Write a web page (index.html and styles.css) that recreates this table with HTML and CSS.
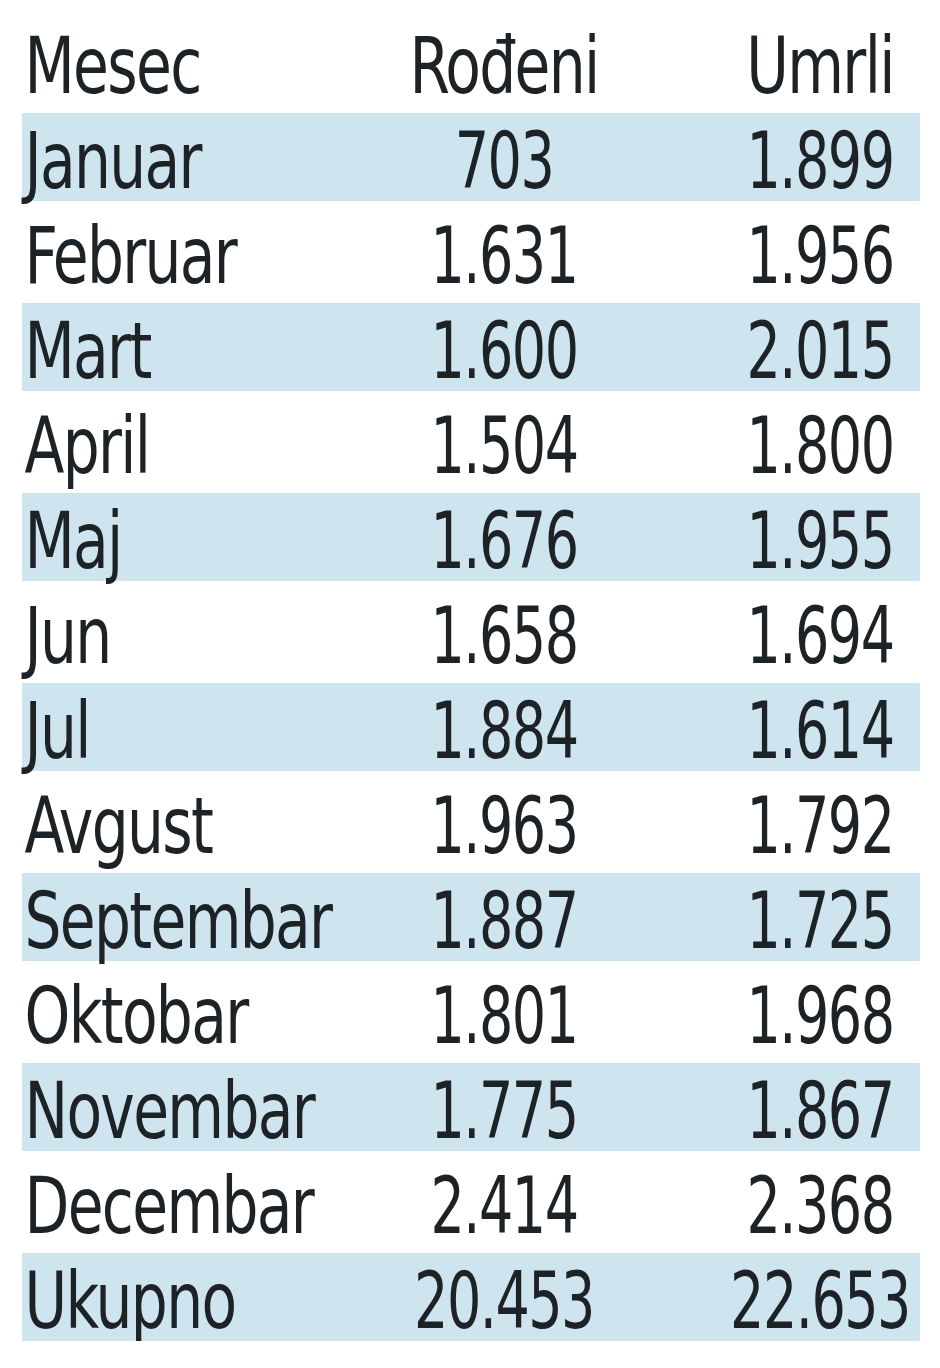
FILE: index.html
```html
<!DOCTYPE html>
<html lang="sr">
<head>
<meta charset="utf-8">
<title>Rođeni i umrli po mesecima</title>
<link rel="stylesheet" href="styles.css">
</head>
<body>
<div class="table">
  <div class="row head"><span class="c1">Mesec</span><span class="c2">Rođeni</span><span class="c3">Umrli</span></div>
  <div class="row alt"><span class="c1">Januar</span><span class="c2">703</span><span class="c3">1.899</span></div>
  <div class="row"><span class="c1">Februar</span><span class="c2">1.631</span><span class="c3">1.956</span></div>
  <div class="row alt"><span class="c1">Mart</span><span class="c2">1.600</span><span class="c3">2.015</span></div>
  <div class="row"><span class="c1">April</span><span class="c2">1.504</span><span class="c3">1.800</span></div>
  <div class="row alt"><span class="c1">Maj</span><span class="c2">1.676</span><span class="c3">1.955</span></div>
  <div class="row"><span class="c1">Jun</span><span class="c2">1.658</span><span class="c3">1.694</span></div>
  <div class="row alt"><span class="c1">Jul</span><span class="c2">1.884</span><span class="c3">1.614</span></div>
  <div class="row"><span class="c1">Avgust</span><span class="c2">1.963</span><span class="c3">1.792</span></div>
  <div class="row alt"><span class="c1">Septembar</span><span class="c2">1.887</span><span class="c3">1.725</span></div>
  <div class="row"><span class="c1">Oktobar</span><span class="c2">1.801</span><span class="c3">1.968</span></div>
  <div class="row alt"><span class="c1">Novembar</span><span class="c2">1.775</span><span class="c3">1.867</span></div>
  <div class="row"><span class="c1">Decembar</span><span class="c2">2.414</span><span class="c3">2.368</span></div>
  <div class="row alt"><span class="c1">Ukupno</span><span class="c2">20.453</span><span class="c3">22.653</span></div>
</div>
</body>
</html>
```
FILE: styles.css
```css
html, body {
  margin: 0;
  padding: 0;
  background: #ffffff;
}
body {
  font-family: "DejaVu Sans Condensed", "DejaVu Sans", "Liberation Sans", sans-serif;
  font-stretch: condensed;
  color: #1d2226;
}
.table {
  display: flex;
  flex-direction: column;
  gap: 7px;
  padding: 18px 0 0 22px;
  width: 898px;
}
.row {
  display: grid;
  grid-template-columns: 266px 432px 200px;
  height: 88px;
  box-sizing: border-box;
  padding-top: 8px;
  font-size: 78px;
  line-height: 80px;
  letter-spacing: -2px;
  white-space: nowrap;
}
.row.alt {
  background: #cee4ee;
}
.c1 {
  padding-left: 3px;
  transform: scaleX(0.83);
  transform-origin: left center;
}
.c2, .c3 {
  margin: 0 -60px;
  text-align: center;
  transform: scaleX(0.77);
  transform-origin: center center;
}
.head .c2, .head .c3 {
  transform: scaleX(0.83);
}
```
